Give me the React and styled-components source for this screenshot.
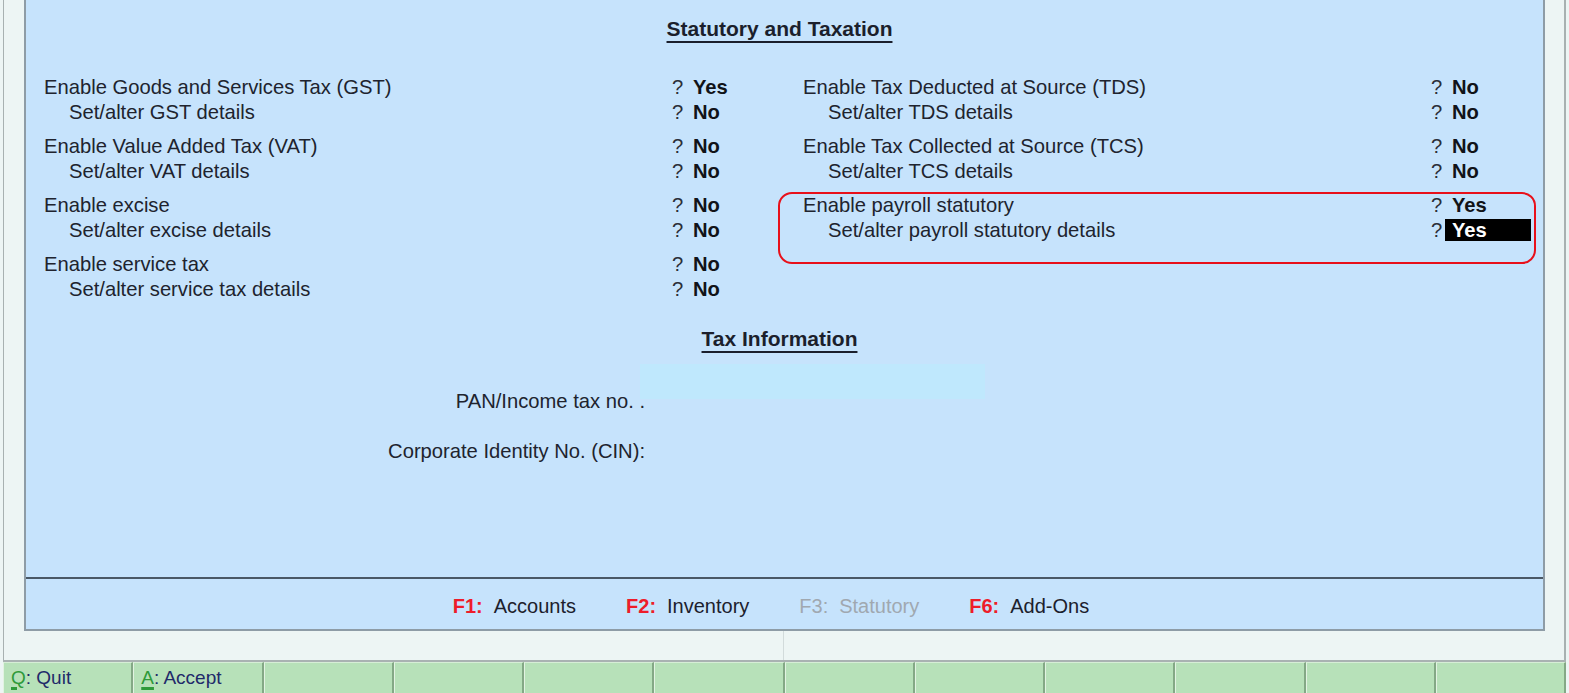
import React from "react";
import styled, { createGlobalStyle } from "styled-components";

const leftGroups = [
  [
    { label: "Enable Goods and Services Tax (GST)", value: "Yes" },
    { label: "Set/alter GST details", value: "No", sub: true },
  ],
  [
    { label: "Enable Value Added Tax (VAT)", value: "No" },
    { label: "Set/alter VAT details", value: "No", sub: true },
  ],
  [
    { label: "Enable excise", value: "No" },
    { label: "Set/alter excise details", value: "No", sub: true },
  ],
  [
    { label: "Enable service tax", value: "No" },
    { label: "Set/alter service tax details", value: "No", sub: true },
  ],
];

const rightGroups = [
  [
    { label: "Enable Tax Deducted at Source (TDS)", value: "No" },
    { label: "Set/alter TDS details", value: "No", sub: true },
  ],
  [
    { label: "Enable Tax Collected at Source (TCS)", value: "No" },
    { label: "Set/alter TCS details", value: "No", sub: true },
  ],
  {
    marked: true,
    rows: [
      { label: "Enable payroll statutory", value: "Yes" },
      { label: "Set/alter payroll statutory details", value: "Yes", sub: true, selected: true },
    ],
  },
];

const footerKeys = [
  { key: "F1:", name: "Accounts" },
  { key: "F2:", name: "Inventory" },
  { key: "F3:", name: "Statutory", disabled: true },
  { key: "F6:", name: "Add-Ons" },
];

const statusCells = [
  { key: "Q", text: ": Quit" },
  { key: "A", text: ": Accept" },
  {}, {}, {}, {}, {}, {}, {}, {}, {}, {},
];

const GlobalStyle = createGlobalStyle`
  html, body {
    margin: 0;
    padding: 0;
    background: #edf5f4;
    font-family: "Liberation Sans", Arial, sans-serif;
  }
  * {
    box-sizing: border-box;
  }
`;

const Screen = styled.div`
  width: 1569px;
  height: 693px;
  display: flex;
  flex-direction: column;
  overflow: hidden;
`;

const Workspace = styled.div`
  margin-left: 3px;
  width: 1563px;
  height: 660px;
  border-left: 1px solid #a8b1b1;
  border-right: 2px solid #a8b1b1;
  padding-left: 20px;
  display: flex;
  flex-direction: column;
`;

const Panel = styled.div`
  width: 1521px;
  height: 631px;
  background: #c6e3fc;
  border: 2px solid #8e9ca6;
  border-top: none;
  display: flex;
  flex-direction: column;
`;

const Body = styled.div`
  flex: 1;
  padding-top: 17px;
  color: #20232e;
`;

const Heading = styled.h2`
  margin: ${(p) => p.$top || 0}px 0 0;
  text-align: center;
  font-size: 21px;
  font-weight: bold;
  line-height: 24px;
  color: #1b1f2c;
  padding-right: 10px;

  span {
    text-decoration: underline;
    text-decoration-thickness: 2px;
    text-underline-offset: 5px;
  }
`;

const Columns = styled.div`
  margin-top: ${(p) => p.$top}px;
  display: grid;
  grid-template-columns: 759px 1fr;
  padding-left: 18px;
`;

const Column = styled.div`
  display: flex;
  flex-direction: column;
  gap: 10px;
`;

const Group = styled.div`
  position: relative;

  ${(p) =>
    p.$marked &&
    `
    &::after {
      content: "";
      position: absolute;
      left: -25px;
      right: 7px;
      top: -1px;
      bottom: -22px;
      border: 2px solid #e8101a;
      border-radius: 14px;
      pointer-events: none;
    }
  `}
`;

const Row = styled.div`
  display: grid;
  grid-template-columns: 628px 21px auto;
  height: 24.5px;
  align-items: center;
  font-size: 20.2px;
  line-height: 22px;
`;

const Label = styled.span`
  padding-left: ${(p) => (p.$sub ? 25 : 0)}px;
  white-space: nowrap;
`;

const Ask = styled.span`
  color: #2b2e38;
`;

const Value = styled.span`
  font-weight: bold;
  color: ${(p) => (p.$selected ? "#ffffff" : "#111318")};
  background: ${(p) => (p.$selected ? "#000000" : "transparent")};
  display: inline-block;
  height: 22px;
  width: ${(p) => (p.$selected ? "86px" : "auto")};
  margin-left: ${(p) => (p.$selected ? -7 : 0)}px;
  padding-left: ${(p) => (p.$selected ? 7 : 0)}px;
`;

const Fields = styled.div`
  margin-top: 13px;
  display: grid;
  grid-template-columns: 614px 345px;
  grid-auto-rows: auto;
  row-gap: 26px;
  font-size: 20.2px;
  line-height: 24px;
  color: #20232e;
`;

const FieldLabel = styled.span`
  text-align: right;
  align-self: end;
  white-space: nowrap;
  margin-right: -5px;
`;

const FieldBox = styled.div`
  align-self: start;
  height: ${(p) => (p.$filled ? 35 : 0)}px;
  margin-bottom: ${(p) => (p.$filled ? 14 : 0)}px;
  background: ${(p) => (p.$filled ? "#bfe8fd" : "transparent")};
`;

const Divider = styled.div`
  height: 2px;
  background: #4a5866;
`;

const ButtonBar = styled.div`
  height: 50px;
  display: flex;
  justify-content: center;
  align-items: center;
  gap: 50px;
  padding-top: 4px;
  padding-right: 27px;
  font-size: 20px;
`;

const KeyItem = styled.span`
  display: flex;
  gap: 11px;
  color: ${(p) => (p.$disabled ? "#a0a8b0" : "#1c202c")};

  b {
    color: ${(p) => (p.$disabled ? "#a0a8b0" : "#ee1c2a")};
    font-weight: ${(p) => (p.$disabled ? "normal" : "bold")};
  }
`;

const Gutter = styled.div`
  flex: 1;
  width: 760px;
  border-right: 1px solid #d2dbdb;
`;

const StatusBar = styled.div`
  margin-left: 3px;
  width: 1563px;
  height: 33px;
  border-top: 2px solid #a9b2b2;
  display: grid;
  grid-template-columns: repeat(12, 1fr);
  background: #b7e1b9;
`;

const StatusCell = styled.div`
  border-left: 1px solid #e2f3e2;
  border-right: 2px solid #84a886;
  border-top: 1px solid #d6eed6;
  padding-left: 7px;
  display: flex;
  align-items: center;
  font-size: 19px;
  color: #1f2a6a;

  u {
    color: #2f9a3a;
    text-decoration-thickness: 3px;
    text-underline-offset: 3px;
  }
`;

const renderRows = (rows) =>
  rows.map((r) => (
    <Row key={r.label}>
      <Label $sub={r.sub}>{r.label}</Label>
      <Ask>?</Ask>
      <span>
        <Value $selected={r.selected}>{r.value}</Value>
      </span>
    </Row>
  ));

const App = () => {
  return (
    <Screen>
      <GlobalStyle />
      <Workspace>
        <Panel>
          <Body>
            <Heading>
              <span>Statutory and Taxation</span>
            </Heading>
            <Columns $top={34}>
              <Column>
                {leftGroups.map((g, i) => (
                  <Group key={i}>{renderRows(g)}</Group>
                ))}
              </Column>
              <Column>
                {rightGroups.map((g, i) =>
                  Array.isArray(g) ? (
                    <Group key={i}>{renderRows(g)}</Group>
                  ) : (
                    <Group key={i} $marked={g.marked}>
                      {renderRows(g.rows)}
                    </Group>
                  )
                )}
              </Column>
            </Columns>
            <Heading $top={26}>
              <span>Tax Information</span>
            </Heading>
            <Fields>
              <FieldLabel>PAN/Income tax no. .</FieldLabel>
              <FieldBox $filled />
              <FieldLabel>Corporate Identity No. (CIN):</FieldLabel>
              <FieldBox />
            </Fields>
          </Body>
          <Divider />
          <ButtonBar>
            {footerKeys.map((k) => (
              <KeyItem key={k.key} $disabled={k.disabled}>
                <b>{k.key}</b>
                {k.name}
              </KeyItem>
            ))}
          </ButtonBar>
        </Panel>
        <Gutter />
      </Workspace>
      <StatusBar>
        {statusCells.map((c, i) => (
          <StatusCell key={i}>
            {c.key && (
              <>
                <u>{c.key}</u>
                {c.text}
              </>
            )}
          </StatusCell>
        ))}
      </StatusBar>
    </Screen>
  );
};

export default App;
